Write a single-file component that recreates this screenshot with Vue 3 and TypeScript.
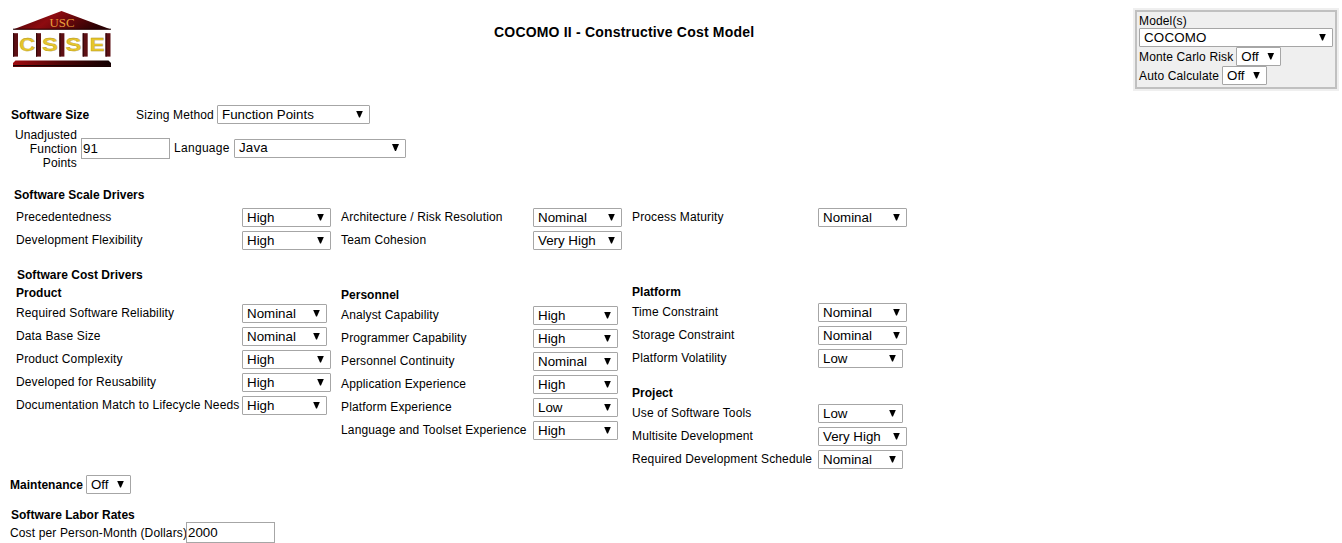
<script setup lang="ts">
interface Driver {
  label: string
  value: string
  narrow?: boolean
}

interface Group {
  id: string
  title?: string
  rows: Driver[]
}

const scaleColumns: Group[] = [
  {
    id: 'first',
    rows: [
      { label: 'Precedentedness', value: 'High' },
      { label: 'Development Flexibility', value: 'High' },
    ],
  },
  {
    id: 'second',
    rows: [
      { label: 'Architecture / Risk Resolution', value: 'Nominal' },
      { label: 'Team Cohesion', value: 'Very High' },
    ],
  },
  { id: 'third', rows: [{ label: 'Process Maturity', value: 'Nominal' }] },
]

const costColumns: Group[][] = [
  [
    {
      id: 'product',
      title: 'Product',
      rows: [
        { label: 'Required Software Reliability', value: 'Nominal', narrow: true },
        { label: 'Data Base Size', value: 'Nominal', narrow: true },
        { label: 'Product Complexity', value: 'High' },
        { label: 'Developed for Reusability', value: 'High' },
        { label: 'Documentation Match to Lifecycle Needs', value: 'High', narrow: true },
      ],
    },
  ],
  [
    {
      id: 'personnel',
      title: 'Personnel',
      rows: [
        { label: 'Analyst Capability', value: 'High', narrow: true },
        { label: 'Programmer Capability', value: 'High', narrow: true },
        { label: 'Personnel Continuity', value: 'Nominal', narrow: true },
        { label: 'Application Experience', value: 'High', narrow: true },
        { label: 'Platform Experience', value: 'Low', narrow: true },
        { label: 'Language and Toolset Experience', value: 'High', narrow: true },
      ],
    },
  ],
  [
    {
      id: 'platform',
      title: 'Platform',
      rows: [
        { label: 'Time Constraint', value: 'Nominal' },
        { label: 'Storage Constraint', value: 'Nominal' },
        { label: 'Platform Volatility', value: 'Low', narrow: true },
      ],
    },
    {
      id: 'project',
      title: 'Project',
      rows: [
        { label: 'Use of Software Tools', value: 'Low', narrow: true },
        { label: 'Multisite Development', value: 'Very High' },
        { label: 'Required Development Schedule', value: 'Nominal', narrow: true },
      ],
    },
  ],
]

const pillars = [1, 24, 47.4, 70.7, 93.5]
</script>

<template>
  <main class="page">
    <header class="top">
      <svg class="logo" width="100" height="58" viewBox="0 0 100 58">
        <defs>
          <linearGradient id="roof" x1="0" x2="1" y1="0" y2="0.25">
            <stop offset="0" stop-color="#3a0204" />
            <stop offset="0.45" stop-color="#8e0b10" />
            <stop offset="1" stop-color="#2c0103" />
          </linearGradient>
          <linearGradient id="base" x1="0" x2="1" y1="0" y2="0">
            <stop offset="0" stop-color="#a00b10" />
            <stop offset="0.5" stop-color="#4d0406" />
            <stop offset="1" stop-color="#120001" />
          </linearGradient>
        </defs>
        <path d="M1 19.4 49.5 1 99 19.4Z" fill="url(#roof)" />
        <path d="M1 19.2H99" stroke="#220203" stroke-width="1" />
        <text class="usc" x="37.5" y="16.5" textLength="25" lengthAdjust="spacingAndGlyphs">USC</text>
        <g v-for="x in pillars" :key="x">
          <rect :x="x" y="23.2" width="5" height="23.4" fill="#5d1014" />
          <rect :x="x" y="23.2" width="1.2" height="23.4" fill="#35070a" />
        </g>
        <g class="csse">
          <text x="7.2" y="41" textLength="16" lengthAdjust="spacingAndGlyphs">C</text>
          <text x="30" y="41" textLength="16" lengthAdjust="spacingAndGlyphs">S</text>
          <text x="53.5" y="41" textLength="16" lengthAdjust="spacingAndGlyphs">S</text>
          <text x="77.8" y="41" textLength="15" lengthAdjust="spacingAndGlyphs">E</text>
        </g>
        <path d="M3.5 50.6H96.5L99 53V57H1V53Z" fill="url(#base)" />
        <path d="M1 55.8H99" stroke="#1c0203" stroke-width="1.6" />
      </svg>
      <h1>COCOMO II - Constructive Cost Model</h1>
      <aside class="panel">
        <div class="panel-line first">Model(s)</div>
        <div class="select models"><span>COCOMO</span><i class="arrow"></i></div>
        <div class="panel-line">
          Monte Carlo Risk
          <div class="select off"><span>Off</span><i class="arrow"></i></div>
        </div>
        <div class="panel-line">
          Auto Calculate
          <div class="select off"><span>Off</span><i class="arrow"></i></div>
        </div>
      </aside>
    </header>

    <section class="size">
      <div class="line">
        <h2>Software Size</h2>
        <label>Sizing Method</label>
        <div class="select method"><span>Function Points</span><i class="arrow"></i></div>
      </div>
      <div class="line points">
        <label class="ufp">Unadjusted<br />Function<br />Points</label>
        <div class="input">91</div>
        <label class="lang">Language</label>
        <div class="select language"><span>Java</span><i class="arrow"></i></div>
      </div>
    </section>

    <h2 class="scale-title">Software Scale Drivers</h2>
    <section class="columns">
      <div v-for="group in scaleColumns" :key="group.id">
        <div v-for="row in group.rows" :key="row.label" class="row">
          <label>{{ row.label }}</label>
          <div class="select"><span>{{ row.value }}</span><i class="arrow"></i></div>
        </div>
      </div>
    </section>

    <h2 class="cost-title">Software Cost Drivers</h2>
    <section class="columns cost">
      <div v-for="(groups, index) in costColumns" :key="index">
        <div v-for="group in groups" :key="group.id" :class="['group', group.id]">
          <h3>{{ group.title }}</h3>
          <div v-for="row in group.rows" :key="row.label" class="row">
            <label>{{ row.label }}</label>
            <div :class="['select', { narrow: row.narrow }]">
              <span>{{ row.value }}</span><i class="arrow"></i>
            </div>
          </div>
        </div>
      </div>
    </section>

    <section class="maintenance">
      <h2>Maintenance</h2>
      <div class="select off"><span>Off</span><i class="arrow"></i></div>
    </section>

    <section class="labor">
      <h2>Software Labor Rates</h2>
      <div class="line">
        <label>Cost per Person-Month (Dollars)</label>
        <div class="input">2000</div>
      </div>
    </section>
  </main>
</template>

<style>
body {
  background: #fff;
  overflow: hidden;
}
</style>

<style scoped>
.page {
  box-sizing: border-box;
  width: 1342px;
  height: 543px;
  overflow: hidden;
  color: #000;
  font: 12px/14px "Liberation Sans", Arial, sans-serif;
  letter-spacing: 0.14px;
  white-space: nowrap;
}
h1,
h2,
h3 {
  margin: 0;
  font-size: 12px;
  line-height: 14px;
  font-weight: 700;
  letter-spacing: 0.02px;
}
.top {
  display: flex;
  align-items: flex-start;
  height: 105px;
}
.logo {
  display: block;
  margin: 10px 0 0 12px;
}
.usc {
  font: 12.5px "Liberation Serif", serif;
  fill: #e8a13c;
  letter-spacing: 0;
}
.csse {
  font: 700 17.5px "Liberation Sans", sans-serif;
  fill: #e6c62c;
  stroke: #b0921c;
  stroke-width: 0.3px;
  letter-spacing: 0;
}
h1 {
  margin: 24px 0 0 382px;
  width: 641px;
  font-size: 14px;
  line-height: 16px;
  letter-spacing: 0.19px;
}
.panel {
  box-sizing: border-box;
  flex: none;
  width: 202px;
  height: 79px;
  margin-top: 10px;
  padding: 2px 2px 0;
  border: 2px solid #c0c0c0;
  outline: 2px solid #efefef;
  background: #efefef;
}
.panel-line {
  display: flex;
  align-items: center;
  gap: 3px;
  height: 19px;
}
.panel-line.first {
  height: 14px;
}
.select {
  box-sizing: border-box;
  display: flex;
  flex: none;
  align-items: center;
  justify-content: space-between;
  width: 89px;
  height: 19px;
  padding: 0 6px 0 4px;
  border: 1px solid #a6a6a6;
  border-radius: 1px;
  background: #fff;
  font-size: 13.333px;
  line-height: 17px;
  letter-spacing: 0;
}
.select span {
  margin-top: -1px;
}
.select.narrow {
  width: 85px;
}
.select.off {
  width: 45px;
}
.select.models {
  width: 194px;
  letter-spacing: 0.2px;
}
.select.method {
  width: 153px;
}
.select.language {
  width: 172px;
  letter-spacing: 0.2px;
}
.arrow {
  width: 7px;
  height: 7px;
  margin-top: -1px;
  background: #000;
  clip-path: polygon(0 0, 100% 0, 57% 100%, 43% 100%);
}
.input {
  box-sizing: border-box;
  width: 89px;
  height: 21px;
  padding-left: 1px;
  border: 1px solid #a6a6a6;
  font-size: 13.333px;
  line-height: 19px;
  letter-spacing: 0;
}
.line {
  display: flex;
  align-items: center;
}
.size {
  height: 83px;
  padding-left: 11px;
}
.size h2 {
  width: 125px;
}
.size .line:first-child label {
  width: 81px;
}
.points {
  margin-top: 4px;
}
.points > :not(.ufp) {
  margin-bottom: 2px;
}
.ufp {
  width: 66px;
  margin-right: 4px;
  text-align: right;
}
.lang {
  width: 60px;
  margin-left: 4px;
  letter-spacing: 0.3px;
}
.scale-title {
  height: 18px;
  padding-left: 14px;
}
.columns {
  display: grid;
  grid-template-columns: 325px 291px 275px;
  height: 62px;
  padding-left: 16px;
}
.row {
  display: flex;
  align-items: center;
  height: 23px;
}
.row label {
  width: 226px;
  padding-bottom: 1px;
}
.columns > div:nth-child(2) label {
  width: 192px;
}
.columns > div:nth-child(3) label {
  width: 186px;
}
.cost-title {
  padding-left: 17px;
}
.cost {
  height: 193px;
}
.group h3 {
  height: 16px;
}
.product {
  padding-top: 4px;
}
.personnel {
  padding-top: 6px;
}
.platform {
  padding-top: 3px;
}
.project {
  padding-top: 16px;
}
.maintenance {
  display: flex;
  align-items: center;
  height: 19px;
  padding-left: 10px;
}
.maintenance h2 {
  width: 76px;
}
.labor {
  padding: 14px 0 0 10px;
}
.labor h2 {
  padding-left: 1px;
}
.labor label {
  width: 176px;
}
</style>
